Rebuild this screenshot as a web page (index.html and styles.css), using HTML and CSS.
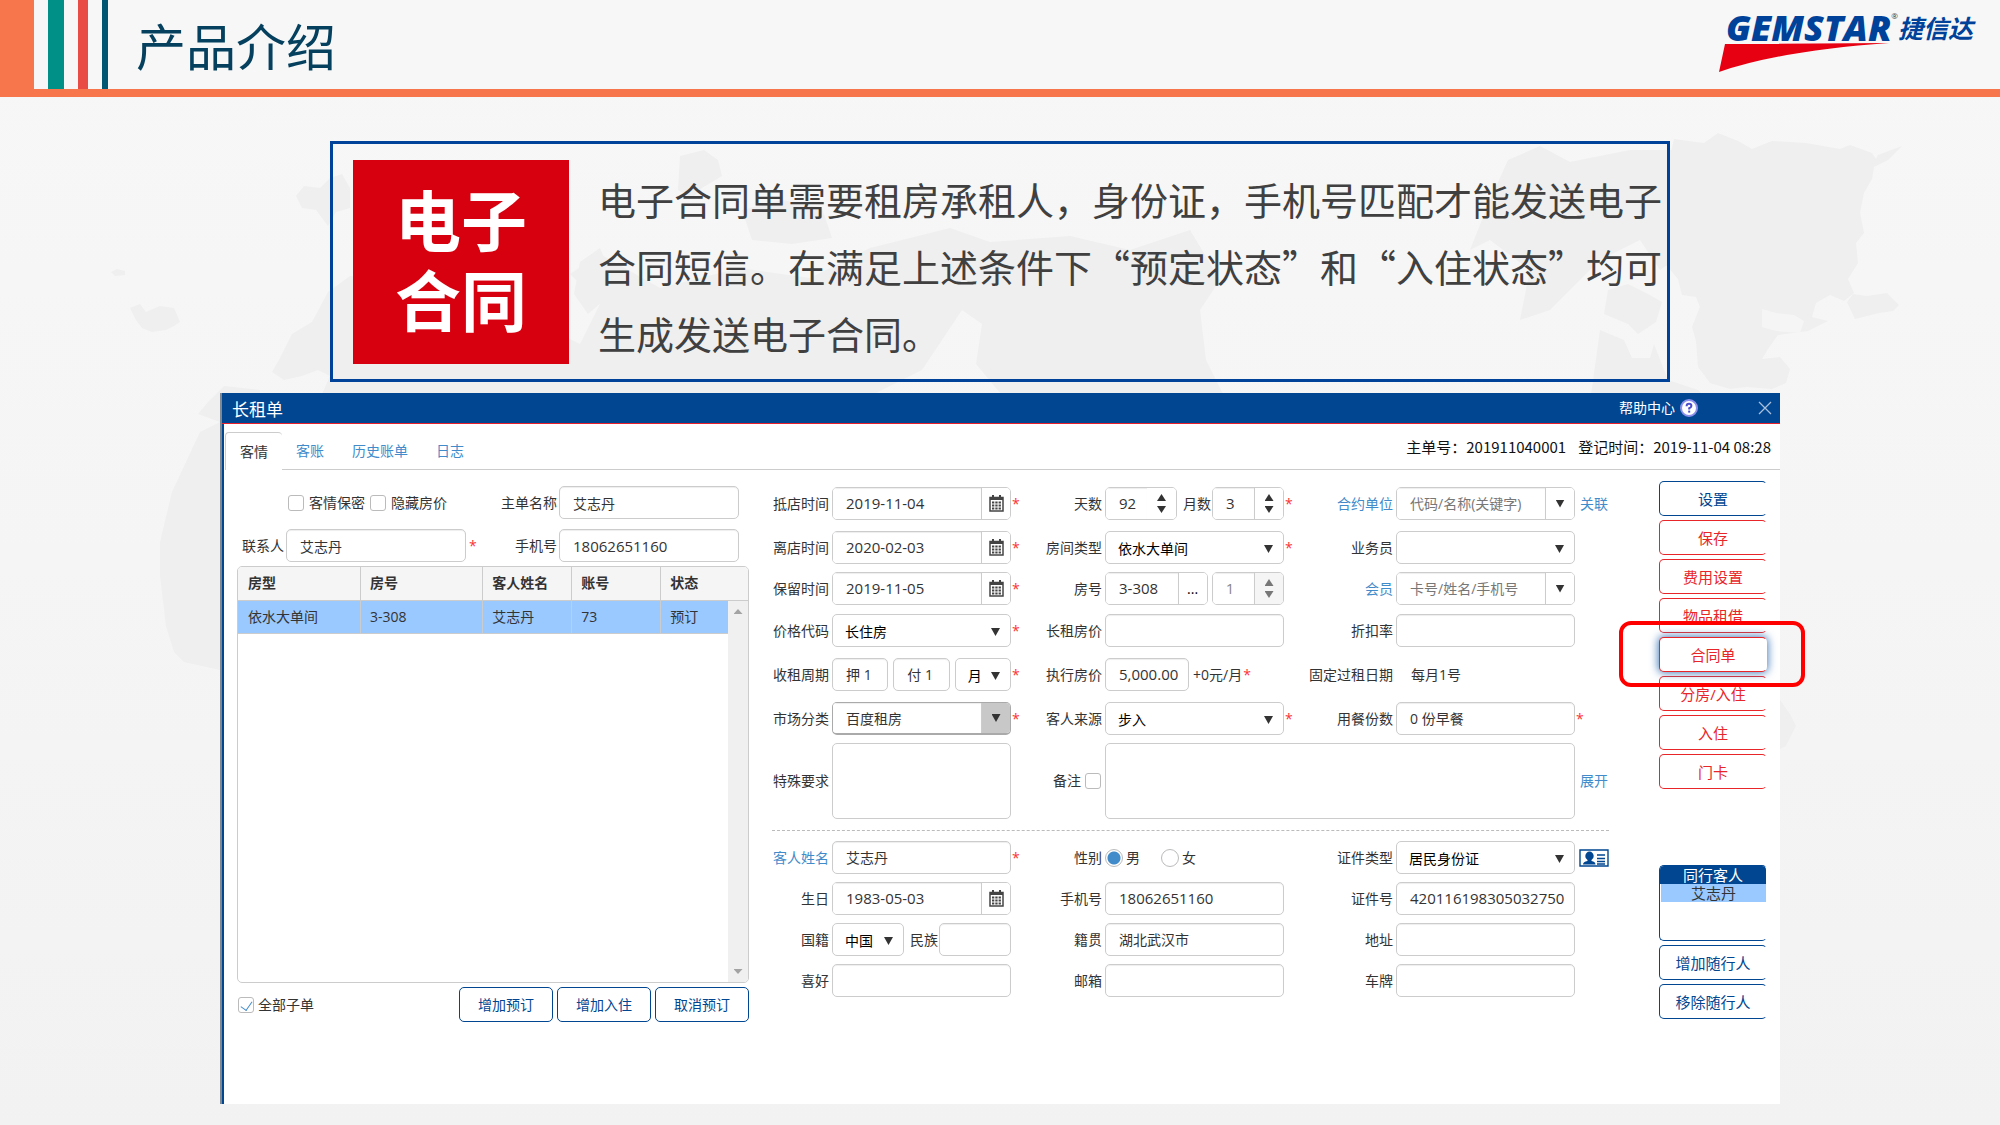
FILE: index.html
```html
<!DOCTYPE html>
<html lang="zh-CN">
<head>
<meta charset="utf-8">
<title>产品介绍 - 电子合同</title>
<link rel="stylesheet" href="styles.css">
</head>
<body>
<svg class="world" viewBox="0 0 2000 1125" preserveAspectRatio="xMidYMin slice" aria-hidden="true">
  <path d="M130 308l10-4 6 8 14-6 14 2 6 14-6 4-8 4-14 2-10-4-6-8zM111 272l6-3 8 2v4l-10 1zM296 196l8-10 16 2 10-10 12-4 8 14 0 20-14 4-8 14-12-16-14-2z"/>
  <path d="M350 276l-22 16-16 30-20 12-12 24-8 14 12 8 18-4 16-6 12 6-8 18 40 6h500l60-30 40-60 20 14-6 40 30 36h220l-20-40-6-50 20-30-30-50-60 20-60-14-80 6-40-14-80 20-60 30-70-10-80 20-60-34-30 20 30 30-20 40-40-20-20-40-14 10z"/>
  <path d="M580 262l20-14 10 24-8 30-14 12-14-20zM680 156l24-6 14 10 4 16-20 12-10 10-14-8zM742 210l40-10 40 8 10 30-40 6-40-4zM1508 160l32-14 30 16 60-12 44 0 0 110-14 10-20-30-40 20-50 50-30 10 10-50-40-30-20 10 20-50z"/>
  <path d="M1674 139l30 4 14-10 20 8 14 8 20-8 34 2 34 6 10-4 22 8 4 6 2-4 24-9-14 14-14 7-2 12-8 14-4 20 4 20-8 10 2 20-10 16 6 14-10 8-14-6-14 8-4 14 16 4-20 10-30 4-10 14-6 10 18-2 10 12-4 14-14 6-26-2-16 2-20-6-12-16-2-26-4-14 8-20-4-10-14-2-4-16-22-26-6-10zM1608 290l20-6 20 10 14 8-6 20-18 12-10-10-24-10zM1847 302l6-8 14 2 20-3 12 12-6 6-14 2-24 6zM1600 330l24 10 8 18 18 0 4-14 14 36 30 10 12 12h-120z"/>
  <path d="M1762 309l0 18 14 4 24 2 4-12-10-6-18-2z" class="world-sea"/>
  <path d="M224 386l-16 16-10 12 22 8-20 10-14 30-14 30-12 50 0 34 6 50 8 26 10 10 36 8 40 0v-280zM1780 700l10 14 6 12-10 20-12 6-8-20z"/>
</svg>

<header class="masthead">
  <div class="masthead-block"></div>
  <div class="stripe stripe-teal"></div>
  <div class="stripe stripe-red"></div>
  <div class="stripe stripe-navy"></div>
  <h1>产品介绍</h1>
  <div class="brand">
    <div class="brand-name"><span class="brand-latin">GEMSTAR</span><span class="brand-mark">®</span><span class="brand-cn">捷信达</span></div>
    <svg class="brand-swoosh" viewBox="0 0 170 29" aria-hidden="true"><path d="M6 1L170 0Q60 8 0 29Z" fill="#e60012"/></svg>
  </div>
</header>

<section class="banner">
  <h2>电子<br>合同</h2>
  <p>电子合同单需要租房承租人，身份证，手机号匹配才能发送电子合同短信。在满足上述条件下“预定状态”和“入住状态”均可生成发送电子合同。</p>
</section>

<main class="window">
  <div class="titlebar">
    <h3>长租单</h3>
    <a href="#help" class="help">帮助中心
      <svg viewBox="0 0 18 18" width="18" height="18" aria-hidden="true"><circle cx="9" cy="9" r="8" fill="#fff" stroke="#8d90ea" stroke-width="2"/><path d="M6.6 7.2Q6.6 4.8 9 4.8T11.4 7Q11.4 8.3 9.2 9.2V10.4" fill="none" stroke="#4a4ccb" stroke-width="2"/><path d="M8.2 11.6h2v2h-2z" fill="#4a4ccb"/></svg>
    </a>
    <button class="close" aria-label="关闭"><svg viewBox="0 0 14 14" width="14" height="14"><path d="M1 1L13 13M13 1L1 13" stroke="#a9c0dc" stroke-width="1.3"/></svg></button>
  </div>

  <nav class="tabs">
    <a href="#guest" class="tab tab-active">客情</a>
    <div class="tabs-rest">
      <a href="#bill" class="tab">客账</a>
      <a href="#history" class="tab">历史账单</a>
      <a href="#log" class="tab">日志</a>
      <p class="order-info"><span>主单号：201911040001</span><span>登记时间：2019-11-04 08:28</span></p>
    </div>
  </nav>

  <div class="content">
    <section class="orders">
      <div class="contact">
        <div class="contact-left checks">
          <input type="checkbox" id="secret"><label for="secret">客情保密</label>
          <input type="checkbox" id="hide"><label for="hide">隐藏房价</label>
        </div>
        <label for="main-name">主单名称</label>
        <input type="text" id="main-name" value="艾志丹">
        <div class="contact-left">
          <label for="contact">联系人</label>
          <input type="text" id="contact" value="艾志丹"><span class="star">*</span>
        </div>
        <label for="main-phone">手机号</label>
        <input type="text" class="num" id="main-phone" value="18062651160">
      </div>

      <div class="list">
        <table>
          <thead><tr><th>房型</th><th>房号</th><th>客人姓名</th><th>账号</th><th>状态</th></tr></thead>
          <tbody><tr><td>依水大单间</td><td>3-308</td><td>艾志丹</td><td>73</td><td>预订</td></tr></tbody>
        </table>
        <div class="scrollbar"><i class="tri tri-up"></i><i class="tri tri-down"></i></div>
      </div>

      <div class="list-actions">
        <input type="checkbox" id="all" checked><label for="all">全部子单</label>
        <button class="btn">增加预订</button>
        <button class="btn">增加入住</button>
        <button class="btn">取消预订</button>
      </div>
    </section>

    <form class="details">
      <div class="fields fields-stay">
        <label for="arrive">抵店时间</label>
        <div class="control"><div class="joined"><input type="text" class="num" id="arrive" value="2019-11-04"><button type="button" aria-label="选择日期"><svg class="cal" viewBox="0 0 15 17"><use href="#cal"/></svg></button></div><span class="star">*</span></div>
        <label for="days">天数</label>
        <div class="control"><div class="group group-pair">
          <div class="joined joined-open"><input type="text" class="num" id="days" value="92"><span class="spin"><i class="tri tri-up"></i><i class="tri tri-down"></i></span></div>
          <label for="months">月数</label>
          <div class="joined"><input type="text" class="num" id="months" value="3"><span class="spin"><i class="tri tri-up"></i><i class="tri tri-down"></i></span></div>
        </div><span class="star">*</span></div>
        <label for="company" class="link">合约单位</label>
        <div class="control control-end"><div class="joined"><input type="text" id="company" placeholder="代码/名称(关键字)"><button type="button" aria-label="展开列表"><i class="tri tri-down"></i></button></div><a href="#relate">关联</a></div>

        <label for="leave">离店时间</label>
        <div class="control"><div class="joined"><input type="text" class="num" id="leave" value="2020-02-03"><button type="button" aria-label="选择日期"><svg class="cal" viewBox="0 0 15 17"><use href="#cal"/></svg></button></div><span class="star">*</span></div>
        <label for="room-type">房间类型</label>
        <div class="control"><div class="select"><select id="room-type"><option>依水大单间</option></select></div><span class="star">*</span></div>
        <label for="sales">业务员</label>
        <div class="control control-end"><div class="select"><select id="sales"><option></option></select></div></div>

        <label for="keep">保留时间</label>
        <div class="control"><div class="joined"><input type="text" class="num" id="keep" value="2019-11-05"><button type="button" aria-label="选择日期"><svg class="cal" viewBox="0 0 15 17"><use href="#cal"/></svg></button></div><span class="star">*</span></div>
        <label for="room">房号</label>
        <div class="control"><div class="group">
          <div class="joined joined-room"><input type="text" class="num" id="room" value="3-308"><button type="button">...</button></div>
          <div class="joined joined-off"><input type="text" class="num" value="1" aria-label="房间数" disabled><span class="spin"><i class="tri tri-up"></i><i class="tri tri-down"></i></span></div>
        </div></div>
        <label for="member" class="link">会员</label>
        <div class="control control-end"><div class="joined"><input type="text" id="member" placeholder="卡号/姓名/手机号"><button type="button" aria-label="展开列表"><i class="tri tri-down"></i></button></div></div>

        <label for="price-code">价格代码</label>
        <div class="control"><div class="select"><select id="price-code"><option>长住房</option></select></div><span class="star">*</span></div>
        <label for="long-price">长租房价</label>
        <div class="control"><input type="text" id="long-price"></div>
        <label for="discount">折扣率</label>
        <div class="control control-end"><input type="text" id="discount"></div>

        <label for="deposit">收租周期</label>
        <div class="control"><div class="group-cycle">
          <input type="text" id="deposit" value="押 1">
          <input type="text" value="付 1" aria-label="付">
          <div class="select"><select aria-label="周期单位"><option>月</option></select></div>
        </div><span class="star">*</span></div>
        <label for="price">执行房价</label>
        <div class="control"><div class="group group-price"><input type="text" class="num" id="price" value="5,000.00"><span>+0元/月<span class="star">*</span></span></div></div>
        <span class="label">固定过租日期</span>
        <div class="control control-end"><output>每月1号</output></div>

        <label for="market">市场分类</label>
        <div class="control"><div class="joined joined-active"><input type="text" id="market" value="百度租房"><button type="button" aria-label="展开列表"><i class="tri tri-down"></i></button></div><span class="star">*</span></div>
        <label for="source">客人来源</label>
        <div class="control"><div class="select"><select id="source"><option>步入</option></select></div><span class="star">*</span></div>
        <label for="meals">用餐份数</label>
        <div class="control control-end"><input type="text" id="meals" value="0 份早餐"><span class="star">*</span></div>

        <label for="special" class="tall">特殊要求</label>
        <div class="control"><textarea id="special"></textarea></div>
        <div class="label tall checks"><label for="remark-on">备注</label><input type="checkbox" id="remark-on"></div>
        <div class="control control-end control-wide"><textarea aria-label="备注"></textarea><a href="#expand" class="tall">展开</a></div>
      </div>

      <hr>

      <div class="fields fields-guest">
        <label for="guest-name" class="link">客人姓名</label>
        <div class="control"><input type="text" id="guest-name" value="艾志丹"><span class="star">*</span></div>
        <span class="label">性别</span>
        <div class="control"><div class="radios"><input type="radio" name="sex" id="male" checked><label for="male">男</label><input type="radio" name="sex" id="female"><label for="female">女</label></div></div>
        <label for="id-type">证件类型</label>
        <div class="control control-end"><div class="select"><select id="id-type"><option>居民身份证</option></select></div>
          <button type="button" class="id-card" aria-label="读取证件"><svg viewBox="0 0 30 18" width="30" height="18"><path d="M1 1h28v16H1z" fill="#fff" stroke="#004691" stroke-width="1.4"/><ellipse cx="10.5" cy="7" rx="4.2" ry="4.4" fill="#004691"/><path d="M4 15.5q0-3 4.5-3.500V10h4v2q4 .5 4 3.500z" fill="#004691"/><path d="M18 6h8M18 9.500h8M18 12.500h8M18 15h8" stroke="#004691" stroke-width="1.3"/></svg></button></div>

        <label for="birth">生日</label>
        <div class="control"><div class="joined"><input type="text" class="num" id="birth" value="1983-05-03"><button type="button" aria-label="选择日期"><svg class="cal" viewBox="0 0 15 17"><use href="#cal"/></svg></button></div></div>
        <label for="phone">手机号</label>
        <div class="control"><input type="text" class="num" id="phone" value="18062651160"></div>
        <label for="id-no">证件号</label>
        <div class="control control-end"><input type="text" class="num" id="id-no" value="420116198305032750"></div>

        <label for="nation">国籍</label>
        <div class="control"><div class="group group-pair">
          <div class="select select-nation"><select id="nation"><option>中国</option></select></div>
          <label for="ethnic">民族</label>
          <input type="text" id="ethnic">
        </div></div>
        <label for="native">籍贯</label>
        <div class="control"><input type="text" id="native" value="湖北武汉市"></div>
        <label for="address">地址</label>
        <div class="control control-end"><input type="text" id="address"></div>

        <label for="hobby">喜好</label>
        <div class="control"><input type="text" id="hobby"></div>
        <label for="mail">邮箱</label>
        <div class="control"><input type="text" id="mail"></div>
        <label for="plate">车牌</label>
        <div class="control control-end"><input type="text" id="plate"></div>
      </div>
    </form>

    <aside class="actions">
      <button class="btn">设置</button>
      <button class="btn btn-red">保存</button>
      <button class="btn btn-red">费用设置</button>
      <button class="btn btn-red">物品租借</button>
      <div class="marked"><button class="btn btn-red btn-focus">合同单</button></div>
      <button class="btn btn-red">分房/入住</button>
      <button class="btn btn-red">入住</button>
      <button class="btn btn-red">门卡</button>
      <div class="companions"><h4>同行客人</h4><p>艾志丹</p></div>
      <button class="btn">增加随行人</button>
      <button class="btn">移除随行人</button>
    </aside>
  </div>
</main>

<svg class="defs" aria-hidden="true">
  <symbol id="cal" viewBox="0 0 15 17"><path d="M1 2.500h13v13.500H1z" fill="#fff" stroke="#444" stroke-width="1.500"/><path d="M1 3h13v2H1zM3 0h2v3H3zM10 0h2v3h-2z" fill="#444"/><path d="M3 6.500h2.300v2H3zM6.300 6.500h2.300v2H6.300zM9.600 6.500h2.300v2H9.600zM3 9.500h2.300v2H3zM6.300 9.500h2.300v2H6.300zM9.600 9.500h2.300v2H9.600zM3 12.500h2.300v2H3zM6.300 12.500h2.300v2H6.300zM9.600 12.500h2.300v2H9.600z" fill="#444"/></symbol>
</svg>
</body>
</html>
```
FILE: styles.css
```css
* { box-sizing: border-box; }

body {
  margin: 0;
  min-height: 100vh;
  position: relative;
  overflow-x: hidden;
  background: linear-gradient(#f7f7f7, #f5f5f5 50%, #f2f2f2);
  color: #333;
  font: 14px/20px "Open Sans", "Noto Sans CJK SC", sans-serif;
}

h1, h2, h3, h4, p { margin: 0; font-weight: 400; }
a, .link { color: #428bca; text-decoration: none; }
button, input, select, textarea { font: inherit; color: inherit; margin: 0; }

.world { position: absolute; inset: 0; width: 100%; height: 100%; z-index: -1; fill: #efefef; }
.world-sea { fill: #f5f5f5; }
.defs { position: absolute; width: 0; height: 0; }

/* Header */
.masthead {
  display: flex;
  height: 97px;
  border-bottom: 8px solid #f7764b;
  background: #f7f7f7;
}
.masthead-block { width: 34px; background: #f7764b; }
.stripe { margin-left: 14px; }
.stripe-teal { width: 16px; background: #009087; }
.stripe-red { width: 10px; background: #e84c44; }
.stripe-navy { width: 6px; background: #005773; }
.masthead h1 {
  margin-left: 28px;
  font: 50px/88px "Noto Sans CJK SC", sans-serif;
  color: #05415f;
}
.brand { margin: 12px 27px 0 auto; color: #00429a; }
.brand-name { display: flex; align-items: center; height: 31px; padding-left: 7px; }
.brand-latin { font: italic 800 36px/31px "Open Sans", sans-serif; }
.brand-mark { align-self: flex-start; font-size: 8px; line-height: 8px; color: #333; }
.brand-cn { font: italic 700 25px/31px "Noto Sans CJK SC", sans-serif; }
.brand-swoosh { display: block; width: 170px; height: 29px; }

/* Banner */
.banner {
  display: flex;
  width: 67%;
  margin: 44px auto 0;
  min-height: 241px;
  padding: 16px 0 0 20px;
  border: 3px solid #00429a;
  font-family: "Noto Sans CJK SC", sans-serif;
}
.banner h2 {
  flex: none;
  width: 216px;
  height: 204px;
  padding-top: 17px;
  background: #d7000f;
  color: #fff;
  font-size: 66px;
  font-weight: 700;
  line-height: 80px;
  text-align: center;
}
.banner p {
  flex: 1;
  margin-left: 29px;
  padding-top: 5px;
  font-size: 38px;
  line-height: 67px;
  color: #404040;
}

/* Application window */
.window {
  width: 78%;
  margin: 11px auto 20px;
  background: #fff;
  border-left: 2px solid #808891;
}
.titlebar {
  display: flex;
  align-items: center;
  height: 31px;
  padding: 0 8px 0 10px;
  border-bottom: 1px solid #e8202c;
  background: #004691;
  color: #fff;
}
.titlebar h3 { font-size: 17px; margin-top: 4px; }
.help { display: flex; align-items: center; gap: 5px; margin-left: auto; color: #fff; }
.close { display: flex; margin-left: 60px; padding: 0; border: 0; background: none; }

.tabs {
  display: flex;
  height: 46px;
  padding: 8px 0 0 1px;
  border-left: 2px solid #004691;
}
.tab { line-height: 37px; padding: 0 14px; }
.tab-active {
  border: 1px solid #ccc;
  border-width: 1px 0 0 1px;
  border-radius: 4px 4px 0 0;
  color: #333;
}
.tabs-rest { display: flex; flex: 1; border-bottom: 1px solid #ccc; }
.order-info { display: flex; gap: 12px; margin-left: auto; padding: 5px 9px 0 0; color: #111; font-family: "Noto Sans CJK SC", sans-serif; font-size: 15px; }

.content {
  display: grid;
  grid-template-columns: 512fr 860fr 158fr;
  min-height: 634px;
  padding: 11px 13px 0;
  border-left: 2px solid #004691;
}
.star { color: #f33; padding-left: 1px; }

/* Form controls */
input[type="text"], select, textarea, .joined {
  width: 100%;
  min-width: 0;
  height: 33px;
  border: 1px solid #ccc;
  border-radius: 5px;
  background: #fff;
}
input[type="text"] { padding: 0 12px 0 13px; box-shadow: inset 0 1px 1px #eee; }
input.num { font-size: 15px; padding-right: 4px; }
input::placeholder { color: #777; }
textarea { display: block; height: 76px; resize: none; }
select { appearance: none; padding: 0 12px; color: #000; }
.select { position: relative; }
.select::after {
  content: "";
  position: absolute;
  right: 11px;
  top: 14px;
  width: 9px;
  height: 8px;
  background: #333;
  clip-path: polygon(0 0, 100% 0, 50% 100%);
}
.joined { display: flex; overflow: hidden; }
.joined input[type="text"] { flex: 1; height: 31px; border: 0; border-radius: 0; }
.joined button, .spin {
  flex: none;
  display: flex;
  align-items: center;
  justify-content: center;
  width: 29px;
  padding: 0;
  border: 0;
  border-left: 1px solid #ccc;
  background: #fff;
  color: #000;
}
.spin { flex-direction: column; gap: 5px; }
.joined-open .spin { border-left: 0; }
.joined-off { color: #888; }
.joined-off .spin { background: #f5f5f5; }
.joined-off .tri { background: #777; }
.joined-active { border-color: #aaa; border-bottom-width: 2px; }
.joined-active button { background: #c8c8c8; }
.tri { width: 9px; height: 8px; background: #333; }
.tri-up { clip-path: polygon(50% 0, 100% 100%, 0 100%); }
.tri-down { clip-path: polygon(0 0, 100% 0, 50% 100%); }
.spin .tri { height: 7px; }
.cal { width: 15px; height: 17px; }

input[type="checkbox"], input[type="radio"] {
  flex: none;
  appearance: none;
  position: relative;
  width: 16px;
  height: 16px;
  border: 1px solid #bbb;
  border-radius: 3px;
  background: #fff;
}
input[type="checkbox"]:checked::after {
  content: "";
  position: absolute;
  left: 4px;
  top: 1px;
  width: 6px;
  height: 10px;
  border: solid #428bca;
  border-width: 0 1px 1px 0;
  transform: rotate(35deg);
}
input[type="radio"] { width: 18px; height: 18px; border-radius: 50%; }
input[type="radio"]:checked { background: radial-gradient(circle, #428bca 6px, #fff 7px); }

.btn {
  height: 35px;
  padding: 0;
  border: 1px solid #004691;
  border-radius: 5px;
  background: #fff;
  color: #004691;
}

/* Left panel */
.orders { padding-top: 5px; }
.contact {
  display: grid;
  grid-template-columns: 1fr auto 180px;
  gap: 10px 2px;
  align-items: center;
  padding: 0 10px 4px 0;
}
.contact > label { text-align: right; }
.contact-left { display: flex; align-items: center; gap: 2px; }
.contact-left input[type="text"] { width: 180px; }
.contact-left label { padding-left: 5px; }
.checks { gap: 4px; }
.contact .checks { gap: 5px; padding-left: 51px; }
.contact .checks label { padding: 0; }

.list {
  position: relative;
  height: 417px;
  border: 1px solid #ccc;
  border-radius: 5px;
  overflow: hidden;
}
.list table { width: 100%; border-collapse: collapse; table-layout: fixed; }
.list th, .list td { height: 33px; padding: 0 0 0 9px; border: 1px solid #ccc; border-width: 0 0 1px 1px; text-align: left; }
.list th { background: #f5f5f5; font-weight: 700; }
.list td { background: #99c9ff; }
.list th:first-child, .list td:first-child { width: 24%; border-left: 0; padding-left: 10px; }
.list th:nth-child(2) { width: 24%; }
.list th:nth-child(3), .list th:nth-child(4) { width: 89px; }
.scrollbar {
  position: absolute;
  top: 34px;
  right: 0;
  bottom: 0;
  width: 20px;
  display: flex;
  flex-direction: column;
  align-items: center;
  justify-content: space-between;
  padding: 8px 0;
  background: #f0f0f0;
}
.scrollbar .tri { height: 5px; background: #a3a3a3; }
.list-actions { display: flex; align-items: center; gap: 4px; padding: 4px 0 0 1px; }
.list-actions label { margin-right: auto; }
.list-actions .btn { width: 94px; }

/* Stay and guest details */
.details { padding: 6px 0 0 23px; }
.fields {
  display: grid;
  grid-template-columns: 60fr 189fr 84fr 189fr 102fr 213fr;
  line-height: 33px;
}
.fields-stay { grid-template-rows: 44px 41px 42px 44px 44px 41px 76px; }
.fields-guest { grid-template-rows: repeat(4, 41px); }
.fields > label, .label { padding-right: 3px; text-align: right; white-space: nowrap; }
.control { display: grid; grid-template-columns: minmax(0, 1fr) 10px; align-items: start; }
.control-end { grid-template-columns: minmax(0, 1fr) 34px; }
.control-end > a { padding-left: 5px; white-space: nowrap; }
.control-wide { grid-column: span 3; }
.group { display: flex; gap: 4px; }
.group-pair { gap: 0; justify-content: space-between; }
.group-pair > .joined, .group-pair > input[type="text"], .select-nation { width: 72px; }
.group-pair label { margin-left: auto; padding-right: 1px; }
.joined-room { flex: 103; }
.joined-off { flex: 72; }
.group-cycle { display: grid; grid-template-columns: repeat(3, minmax(0, 1fr)); gap: 5px; }
.group-cycle input[type="text"], .group-cycle select { padding-right: 0; }
.group-price { white-space: nowrap; }
.group-price input[type="text"] { flex: none; width: 84px; }
.control output { padding-left: 15px; }
.tall { line-height: 76px; }
.label.checks { display: flex; align-items: center; justify-content: flex-end; padding-right: 4px; }
.details hr { margin: 11px 0 10px; border: 0; border-top: 1px dashed #bbb; }
.radios { display: flex; align-items: center; height: 33px; gap: 3px; }
.radios label { margin-right: 18px; }
.id-card { align-self: center; margin: 0 0 8px 4px; padding: 0; border: 0; background: none; line-height: 0; }

/* Right-hand actions */
.actions { display: flex; flex-direction: column; gap: 4px; padding-left: 50px; font-size: 15px; }
.actions .btn { width: 100%; border-right-color: transparent; }
.btn-red { border-color: #e8262a; color: #e8262a; }
.btn-focus { box-shadow: 0 0 8px 1px #4a7fbd; }
.marked { position: relative; height: 35px; }
.marked::after {
  content: "";
  position: absolute;
  inset: -16px -38px -15px -40px;
  border: 4px solid #f00;
  border-radius: 12px;
}
.companions {
  height: 76px;
  margin-top: 72px;
  border: 1px solid #004691;
  border-right-color: transparent;
  border-radius: 5px;
  overflow: hidden;
  text-align: center;
  line-height: 18px;
}
.companions h4 { background: #004691; color: #fff; }
.companions p { margin-left: 1px; background: #99c9ff; }
```
